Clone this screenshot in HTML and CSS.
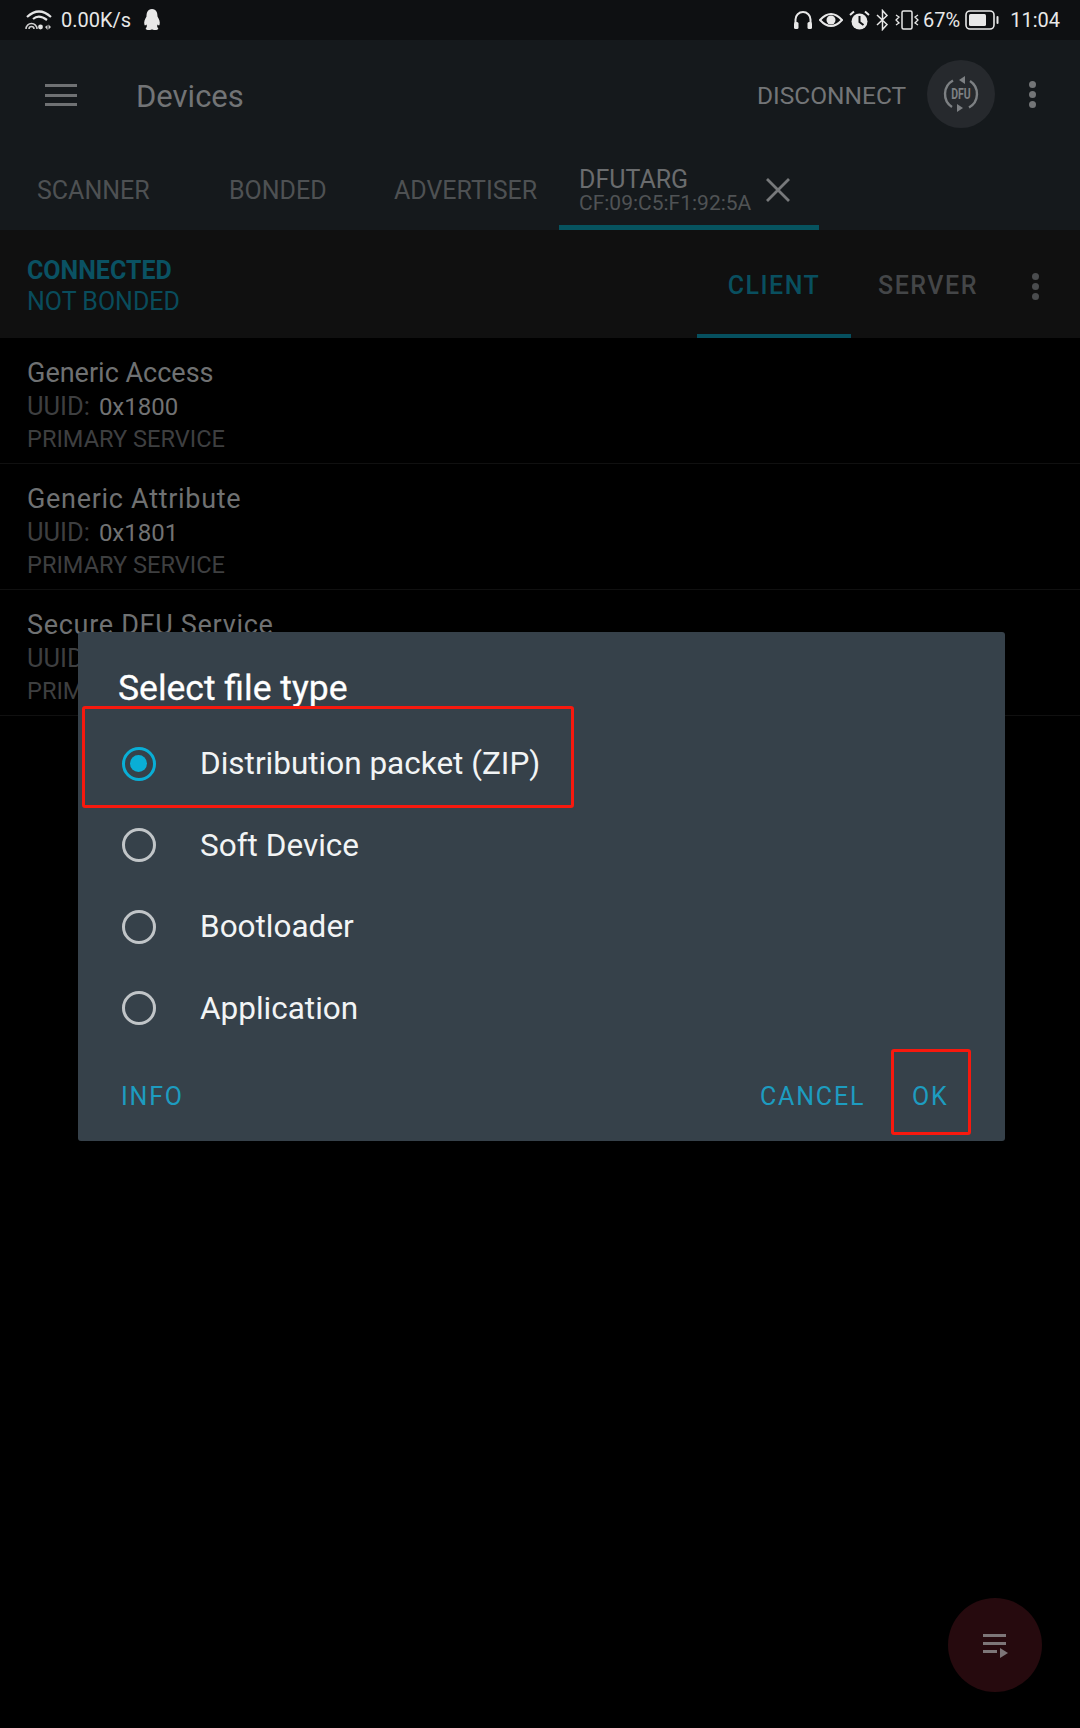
FILE: index.html
```html
<!DOCTYPE html>
<html lang="en">

<head>
  <meta charset="UTF-8" />
  <title>Devices</title>
  <link rel="stylesheet" href="styles.css">
</head>

<body>
  <div class="phone">
    <!--status bar-->
    <div class="status">
      <div class="status-left">
        <svg class="ic-wifi" width="28" height="22" viewBox="0 0 28 22">
          <path d="M2 8 Q14 -3 26 8" fill="none" stroke="#e4e4e4" stroke-width="2.200" />
          <path d="M8 10 Q14 5 22 11" fill="none" stroke="#e4e4e4" stroke-width="2.200" />
          <path d="M1 20 A5.500 5.500 0 0 1 12 20" fill="none" stroke="#d0d0d0" stroke-width="1.500" />
          <path d="M4 20 A2.500 2.500 0 0 1 9 20" fill="none" stroke="#d0d0d0" stroke-width="1.500" />
          <circle cx="15.500" cy="18" r="2.400" fill="#e4e4e4" />
          <path d="M20 18 l2.500 -2 v5 z M23.500 15.500 v5 l2.500 -2.500 z" fill="#d0d0d0" />
        </svg>
        <span class="speed">0.00K/s</span>
        <svg class="ic-qq" width="18" height="22" viewBox="0 0 18 22">
          <path d="M9 0 C13.500 0 14.500 4 14.500 7.500 C16 10 17.500 13 16.500 16 C16 17 15 16 14.500 15.500 C14 17 14 18 15 19 C16 20.500 14 21 12 21 C10.500 21 9.500 20.500 9 20.500 C8.500 20.500 7.500 21 6 21 C4 21 2 20.500 3 19 C4 18 4 17 3.500 15.500 C3 16 2 17 1.500 16 C0.500 13 2 10 3.500 7.500 C3.500 4 4.500 0 9 0 Z" fill="#e8e8e8" />
        </svg>
      </div>
      <div class="status-right">
        <svg width="20" height="20" viewBox="0 0 20 20">
          <path d="M2.500 13 V9.500 A7.500 7.500 0 0 1 17.500 9.500 V13" fill="none" stroke="#e8e8e8" stroke-width="2" />
          <rect x="1" y="12" width="4.500" height="7" rx="1.500" fill="#e8e8e8" />
          <rect x="14.500" y="12" width="4.500" height="7" rx="1.500" fill="#e8e8e8" />
        </svg>
        <svg width="24" height="16" viewBox="0 0 24 16">
          <path d="M1 8 Q12 -4 23 8 Q12 20 1 8 Z" fill="none" stroke="#e8e8e8" stroke-width="2" />
          <circle cx="12" cy="8" r="4.500" fill="#e8e8e8" />
        </svg>
        <svg width="21" height="21" viewBox="0 0 21 21">
          <circle cx="10.500" cy="11.500" r="8" fill="#e8e8e8" />
          <path d="M10.500 6 V12 L14.500 15" fill="none" stroke="#101214" stroke-width="2" />
          <path d="M1 5 L5 1.500 M20 5 L16 1.500" stroke="#e8e8e8" stroke-width="2" />
        </svg>
        <svg width="13" height="22" viewBox="0 0 13 22">
          <path d="M1 6 L11 15.500 L6.500 20.500 V1.500 L11 6.500 L1 16" fill="none" stroke="#e8e8e8" stroke-width="1.500" />
        </svg>
        <svg width="24" height="20" viewBox="0 0 24 20">
          <rect x="7" y="1" width="10" height="18" rx="1.500" fill="none" stroke="#e8e8e8" stroke-width="1.500" />
          <path d="M1 5 L4 7 L1 10 L4 13 L1 15 M23 5 L20 7 L23 10 L20 13 L23 15" fill="none" stroke="#e8e8e8" stroke-width="1.300" />
        </svg>
        <span class="pct">67%</span>
        <svg class="ic-batt" width="34" height="20" viewBox="0 0 34 20">
          <rect x="1" y="1" width="28" height="18" rx="4" fill="none" stroke="#e8e8e8" stroke-width="1.600" />
          <rect x="4" y="4" width="17" height="12" rx="1.500" fill="#e8e8e8" />
          <rect x="31.500" y="6" width="2" height="8" rx="1" fill="#e8e8e8" />
        </svg>
        <span class="clock">11:04</span>
      </div>
    </div>

    <!--toolbar-->
    <div class="toolbar">
      <div class="menu"><i></i><i></i><i></i></div>
      <div class="title">Devices</div>
      <div class="disconnect">DISCONNECT</div>
      <div class="dfu">
        <svg width="40" height="40" viewBox="0 0 40 40">
          <path d="M12 6.500 A15.500 15.500 0 0 0 11 33" fill="none" stroke="#7d8083" stroke-width="2.400" />
          <path d="M28 33.500 A15.500 15.500 0 0 0 29 7" fill="none" stroke="#7d8083" stroke-width="2.400" />
          <path d="M24 2 L18 6 L24 10 Z M16 38 L22 34 L16 30 Z" fill="#7d8083" />
        </svg>
        <span>DFU</span>
      </div>
      <div class="dots"><i></i><i></i><i></i></div>
    </div>

    <!--tabs-->
    <div class="tabs">
      <div class="tab tab-scanner">SCANNER</div>
      <div class="tab tab-bonded">BONDED</div>
      <div class="tab tab-adv">ADVERTISER</div>
      <div class="tab-device">
        <div class="dev-text">
          <div class="dev-name">DFUTARG</div>
          <div class="dev-mac">CF:09:C5:F1:92:5A</div>
        </div>
        <svg width="26" height="26" viewBox="0 0 26 26">
          <path d="M2 2 L24 24 M24 2 L2 24" stroke="#77797b" stroke-width="2.800" />
        </svg>
      </div>
    </div>

    <!--connection strip-->
    <div class="strip">
      <div class="conn">
        <div class="conn-a">CONNECTED</div>
        <div class="conn-b">NOT BONDED</div>
      </div>
      <div class="sub-tab sub-client">CLIENT</div>
      <div class="sub-tab sub-server">SERVER</div>
      <div class="dots dots-strip"><i></i><i></i><i></i></div>
    </div>

    <!--services-->
    <div class="service">
      <div class="svc-name">Generic Access</div>
      <div class="svc-uuid"><span>UUID:</span> <b>0x1800</b></div>
      <div class="svc-type">PRIMARY SERVICE</div>
    </div>
    <div class="service">
      <div class="svc-name svc-wide">Generic Attribute</div>
      <div class="svc-uuid"><span>UUID:</span> <b>0x1801</b></div>
      <div class="svc-type">PRIMARY SERVICE</div>
    </div>
    <div class="service">
      <div class="svc-name svc-wide">Secure DFU Service</div>
      <div class="svc-uuid"><span>UUID:</span></div>
      <div class="svc-type">PRIMARY SERVICE</div>
    </div>

    <!--dialog-->
    <div class="dialog">
      <div class="dlg-title">Select file type</div>
      <div class="opt"><span class="radio on"></span>Distribution packet (ZIP)</div>
      <div class="opt"><span class="radio"></span>Soft Device</div>
      <div class="opt"><span class="radio"></span>Bootloader</div>
      <div class="opt"><span class="radio"></span>Application</div>
      <div class="dlg-btns">
        <span class="btn-info">INFO</span>
        <span class="btn-cancel">CANCEL</span>
        <span class="btn-ok">OK</span>
      </div>
      <div class="mark mark-zip"></div>
      <div class="mark mark-ok"></div>
    </div>

    <div class="fab">
      <svg width="26" height="26" viewBox="0 0 26 26">
        <path d="M1 2 H24 V5 H1 Z M1 10 H24 V13 H1 Z M1 18 H15 V21 H1 Z" fill="#7d7678" />
        <path d="M18 16 L26 21 L18 26 Z" fill="#7d7678" />
      </svg>
    </div>
  </div>
</body>

</html>
```

FILE: styles.css
```css
* {
  padding: 0;
  margin: 0;
  box-sizing: border-box;
}

body {
  background: #000;
  font-family: "Roboto", "Noto Sans", sans-serif;
}

.phone {
  width: 1080px;
  height: 1728px;
  position: relative;
  overflow: hidden;
  background: #000;
}

.status {
  height: 40px;
  padding: 0 20px 0 25px;
  background: #0e1012;
  display: flex;
  justify-content: space-between;
  align-items: center;
  color: #e8e8e8;
  font-size: 20px;
}

.status-left,
.status-right {
  display: flex;
  align-items: center;
}

.speed {
  margin: 0 12px 0 8px;
}

.status-right {
  gap: 6px;
}

.pct {
  margin-left: -2px;
}

.ic-batt {
  margin-left: -1px;
}

.clock {
  margin-left: 5px;
}

.toolbar {
  height: 111px;
  padding-left: 45px;
  background: #15191c;
  display: flex;
  align-items: center;
}

.menu {
  width: 32px;
  height: 22px;
  display: flex;
  flex-direction: column;
  justify-content: space-between;
  margin-top: -1px;
}

.menu i {
  display: block;
  height: 3px;
  background: #6f7173;
}

.title {
  margin-left: 59px;
  width: 621px;
  padding-top: 2px;
  font-size: 31px;
  color: #727476;
}

.disconnect {
  width: 170px;
  font-size: 24.500px;
  color: #737577;
}

.dfu {
  width: 68px;
  height: 68px;
  border-radius: 50%;
  background: #26292d;
  position: relative;
  display: flex;
  align-items: center;
  justify-content: center;
  margin-top: -4px;
}

.dfu span {
  position: absolute;
  font-size: 15px;
  font-weight: 700;
  color: #7d8083;
  transform: scaleX(0.7);
}

.dots {
  width: 8px;
  margin-left: 34px;
  margin-top: -3px;
  display: flex;
  flex-direction: column;
  gap: 3px;
}

.dots i {
  display: block;
  width: 7px;
  height: 7px;
  border-radius: 50%;
  background: #737577;
}

.tabs {
  height: 79px;
  background: #15191c;
  display: flex;
  position: relative;
  color: #4e5153;
  font-size: 25px;
}

.tab {
  padding-top: 25px;
  line-height: 30px;
}

.tab-scanner {
  margin-left: 37px;
  width: 192px;
}

.tab-bonded {
  width: 165px;
}

.tab-adv {
  width: 165px;
}

.tab-device {
  width: 260px;
  border-bottom: 5px solid #06535f;
  padding-left: 20px;
  display: flex;
  align-items: center;
}

.dev-text {
  width: 187px;
  margin-top: 5px;
}

.dev-name {
  font-size: 25px;
  line-height: 25px;
  color: #6a6c6e;
}

.dev-mac {
  font-size: 21px;
  line-height: 22px;
  color: #505355;
}

.tab-device svg {
  margin: 3px 0 0 -1px;
}

.strip {
  height: 108px;
  background: #101010;
  display: flex;
  align-items: center;
  padding-left: 27px;
}

.conn {
  width: 670px;
  margin-top: 4px;
}

.conn-a {
  font-size: 25px;
  line-height: 31px;
  font-weight: 700;
  color: #0a5263;
}

.conn-b {
  font-size: 25px;
  line-height: 31px;
  color: #094c5c;
}

.sub-tab {
  height: 108px;
  line-height: 112px;
  text-align: center;
  font-size: 25px;
  letter-spacing: 1.500px;
  font-weight: 500;
}

.sub-client {
  width: 154px;
  color: #094f5f;
  border-bottom: 4px solid #06505f;
}

.sub-server {
  width: 154px;
  color: #444648;
}

.dots-strip {
  margin-left: 27px;
  margin-top: 4px;
}

.dots-strip i {
  background: #4a4c4e;
}

.service {
  height: 126px;
  padding: 17px 0 0 27px;
  border-bottom: 1px solid #101010;
}

.svc-name {
  font-size: 27px;
  line-height: 36px;
  color: #6f7172;
}

.svc-wide {
  letter-spacing: 0.700px;
}

.svc-uuid {
  font-size: 24px;
  line-height: 31px;
  color: #3e3f40;
}

.svc-uuid span {
  font-size: 25.500px;
}

.svc-uuid b {
  font-weight: 400;
  margin-left: 3px;
  color: #717273;
}

.svc-type {
  font-size: 23.600px;
  line-height: 32px;
  color: #3e3f40;
}

.dialog {
  position: absolute;
  left: 78px;
  top: 632px;
  width: 927px;
  height: 509px;
  background: #36414a;
  border-radius: 3px;
  padding: 34px 0 0 40px;
  color: #fff;
}

.dlg-title {
  font-size: 35.500px;
  line-height: 44px;
  font-weight: 400;
  margin-bottom: 13px;
  -webkit-text-stroke: 0.300px #fff;
}

.opt {
  height: 81.500px;
  display: flex;
  align-items: center;
  font-size: 31.500px;
  color: #f2f4f5;
}

.radio {
  width: 34px;
  height: 34px;
  border: 3.500px solid #c1c5c8;
  border-radius: 50%;
  margin: 0 44px 0 4px;
  padding: 5px;
}

.radio.on {
  border-color: #09aed6;
}

.radio.on::after {
  content: "";
  display: block;
  width: 17px;
  height: 17px;
  border-radius: 50%;
  background: #09aed6;
}

.dlg-btns {
  display: flex;
  margin: 28px 0 0 3px;
  font-size: 25px;
  letter-spacing: 1.800px;
  line-height: 40px;
  color: #1d9cc0;
}

.btn-info {
  width: 639px;
}

.btn-cancel {
  width: 152px;
}

.mark {
  position: absolute;
  border: 3px solid #f8190e;
  border-radius: 3px;
}

.mark-zip {
  left: 4px;
  top: 74px;
  width: 492px;
  height: 102px;
}

.mark-ok {
  left: 813px;
  top: 417px;
  width: 80px;
  height: 86px;
}

.fab {
  position: absolute;
  left: 948px;
  top: 1598px;
  width: 94px;
  height: 94px;
  border-radius: 50%;
  background: #260a0e;
  display: flex;
  align-items: center;
  justify-content: center;
}
```
